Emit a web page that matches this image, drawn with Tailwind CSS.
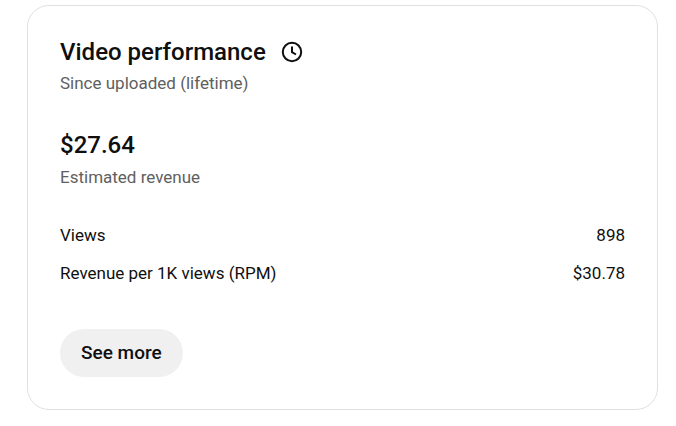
<!DOCTYPE html>
<html lang="en">

<head>
  <meta charset="utf-8">
  <meta name="viewport" content="width=device-width, initial-scale=1">
  <title>Video performance</title>
  <script src="https://cdn.jsdelivr.net/npm/@tailwindcss/browser@4"></script>
</head>

<body class="bg-white font-[Roboto,sans-serif] text-[#0f0f0f]">
  <main class="pt-[5px] pl-[27px] pr-[18px] pb-4">
    <section aria-labelledby="card-title" class="rounded-[22px] border border-[#e0e0e0] p-8">
      <header>
        <div class="flex items-center gap-3.5">
          <h2 id="card-title" class="text-2xl leading-7 font-medium">Video performance</h2>
          <svg class="size-6" viewBox="0 0 24 24" fill="none" stroke="currentColor" stroke-width="2" aria-hidden="true">
            <circle cx="12" cy="12" r="9.2" />
            <path d="M12 6.5V12.2l4 2.3" />
          </svg>
        </div>
        <p class="mt-[5px] text-[17px] leading-6 text-[#606060]">Since uploaded (lifetime)</p>
      </header>

      <div class="mt-[34px]">
        <p class="text-2xl leading-8 font-medium">$27.64</p>
        <p class="mt-1 text-[17px] leading-6 text-[#606060]">Estimated revenue</p>
      </div>

      <dl class="mt-[34px] space-y-3.5 text-[17px] leading-6">
        <div class="flex justify-between">
          <dt>Views</dt>
          <dd>898</dd>
        </div>
        <div class="flex justify-between">
          <dt>Revenue per 1K views (RPM)</dt>
          <dd>$30.78</dd>
        </div>
      </dl>

      <button type="button" class="mt-11 h-12 rounded-full bg-[#f0f0f0] px-[21px] text-[19px] font-medium">See more</button>
    </section>
  </main>
</body>

</html>
